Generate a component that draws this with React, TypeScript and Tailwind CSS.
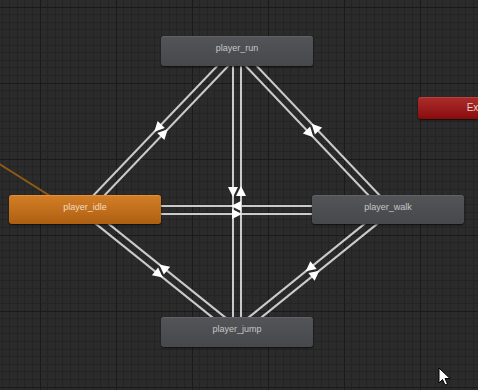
import React from 'react';

type NodeType = {
  id: string;
  label: string;
  x: number;
  y: number;
  w: number;
  h: number;
  kind: 'state' | 'default' | 'exit';
};

const nodes: NodeType[] = [
  { id: 'run', label: 'player_run', x: 161, y: 36, w: 152, h: 30, kind: 'state' },
  { id: 'idle', label: 'player_idle', x: 9, y: 195, w: 152, h: 29, kind: 'default' },
  { id: 'walk', label: 'player_walk', x: 312, y: 195, w: 152, h: 29, kind: 'state' },
  { id: 'jump', label: 'player_jump', x: 161, y: 317, w: 152, h: 30, kind: 'state' },
  { id: 'exit', label: 'Exit', x: 418, y: 97, w: 114, h: 22, kind: 'exit' },
];

const centers: Record<string, [number, number]> = {
  run: [237, 51],
  idle: [85, 210],
  walk: [388, 210],
  jump: [237, 332],
};

const transitions: [string, string][] = [
  ['run', 'idle'],
  ['idle', 'run'],
  ['run', 'walk'],
  ['walk', 'run'],
  ['run', 'jump'],
  ['jump', 'run'],
  ['idle', 'walk'],
  ['walk', 'idle'],
  ['idle', 'jump'],
  ['jump', 'idle'],
  ['walk', 'jump'],
  ['jump', 'walk'],
];

const nodeClass = {
  state:
    'bg-gradient-to-b from-[#525458] to-[#46484c] border-t border-[#606266] text-[#c6c6c6]',
  default:
    'bg-gradient-to-b from-[#d37e26] to-[#ad5f10] border-t border-[#e0913a] text-[#f3dcc4]',
  exit: 'bg-gradient-to-b from-[#aa2a2a] to-[#8a0a0a] border-t border-[#b84040] text-[#eed0d0]',
};

function Grid() {
  const minor = Array.from({ length: 10 }, (_, i) => i * 7.6);
  return (
    <>
      <defs>
        <pattern id="grid" x="40" y="7" width="76" height="76" patternUnits="userSpaceOnUse">
          <rect width="76" height="76" fill="#2b2b2b" />
          {minor.slice(1).map((p) => (
            <g key={p}>
              <line x1={p} y1="0" x2={p} y2="76" stroke="#242424" strokeWidth="1" shapeRendering="crispEdges" />
              <line x1="0" y1={p} x2="76" y2={p} stroke="#242424" strokeWidth="1" shapeRendering="crispEdges" />
            </g>
          ))}
          <line x1="0.5" y1="0" x2="0.5" y2="76" stroke="#1a1a1a" strokeWidth="1.5" shapeRendering="crispEdges" />
          <line x1="0" y1="0.5" x2="76" y2="0.5" stroke="#1a1a1a" strokeWidth="1.5" shapeRendering="crispEdges" />
        </pattern>
      </defs>
      <rect width="478" height="390" fill="url(#grid)" />
    </>
  );
}

function Transition({ from, to }: { from: string; to: string }) {
  const [ax, ay] = centers[from];
  const [bx, by] = centers[to];
  const len = Math.hypot(bx - ax, by - ay);
  const dx = (bx - ax) / len;
  const dy = (by - ay) / len;
  const ox = -dy * 4;
  const oy = dx * 4;
  const mx = (ax + bx) / 2 + ox;
  const my = (ay + by) / 2 + oy;
  const tip = [mx + dx * 5.5, my + dy * 5.5];
  const b1 = [mx - dx * 4.5 - dy * 5, my - dy * 4.5 + dx * 5];
  const b2 = [mx - dx * 4.5 + dy * 5, my - dy * 4.5 - dx * 5];
  return (
    <g>
      <line x1={ax + ox} y1={ay + oy} x2={bx + ox} y2={by + oy} stroke="#cacaca" strokeWidth="2" />
      <polygon points={`${tip[0]},${tip[1]} ${b1[0]},${b1[1]} ${b2[0]},${b2[1]}`} fill="#ffffff" />
    </g>
  );
}

export default function App() {
  return (
    <div className="relative w-[478px] h-[390px] overflow-hidden bg-[#2b2b2b] font-['Liberation_Sans',sans-serif]">
      <svg className="absolute inset-0" width="478" height="390">
        <Grid />
        <line x1="-10" y1="158" x2="85" y2="218" stroke="#8c5b16" strokeWidth="2" />
        {transitions.map(([a, b]) => (
          <Transition key={`${a}-${b}`} from={a} to={b} />
        ))}
      </svg>

      {nodes.map((n) => (
        <div
          key={n.id}
          className={`absolute rounded-[3px] shadow-[0_1px_2px_rgba(0,0,0,0.7)] flex justify-center ${nodeClass[n.kind]}`}
          style={{ left: n.x, top: n.y, width: n.w, height: n.h }}
        >
          <span className={`leading-[12px] ${n.kind === 'exit' ? 'text-[10px] pt-[4px]' : 'text-[9px] pt-[5px]'}`}>{n.label}</span>
        </div>
      ))}

      <svg className="absolute left-[438px] top-[367px]" width="14" height="20" viewBox="0 0 14 20">
        <path d="M1 1 L1 16 L4.5 12.5 L7 18 L9.5 17 L7 11.5 L12 11.5 Z" fill="#ffffff" stroke="#000000" strokeWidth="1" />
      </svg>
    </div>
  );
}
